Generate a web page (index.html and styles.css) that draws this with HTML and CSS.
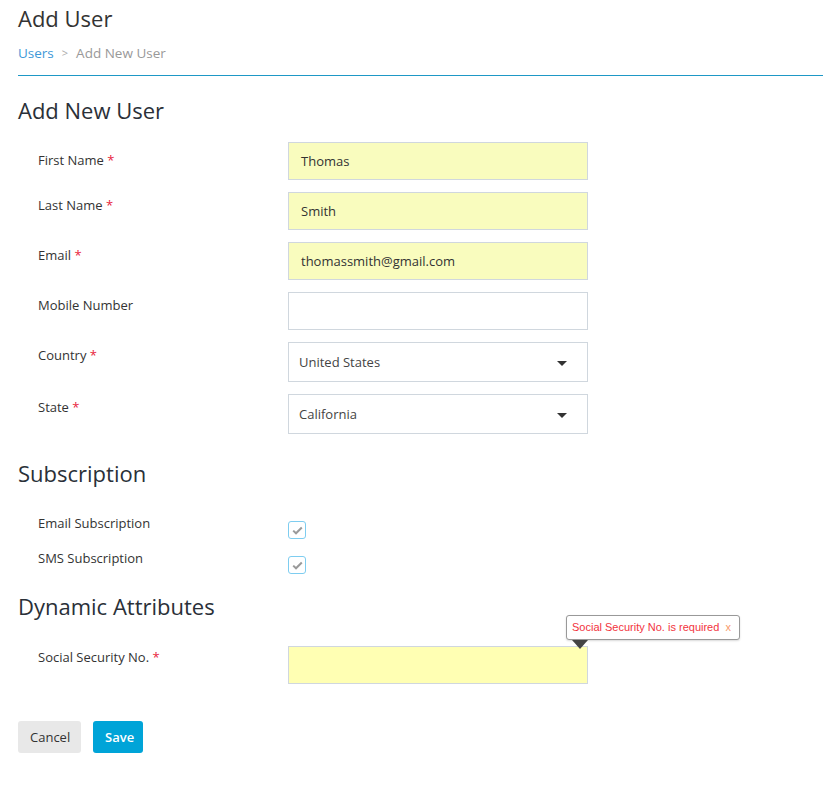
FILE: index.html
```html
<!DOCTYPE html>
<html>
<head>
<meta charset="utf-8">
<link rel="stylesheet" href="styles.css">
</head>
<body>
<div class="page">
  <header class="page-header">
    <h1 class="page-title">Add User</h1>
    <nav class="breadcrumb">
      <a class="crumb-link">Users</a>
      <span class="crumb-sep">&gt;</span>
      <span class="crumb-current">Add New User</span>
    </nav>
  </header>

  <section class="section">
    <h2 class="section-title">Add New User</h2>
    <div class="form-row first-row">
      <label class="form-label">First Name <span class="req">*</span></label>
      <div class="input filled">Thomas</div>
    </div>
    <div class="form-row">
      <label class="form-label">Last Name <span class="req">*</span></label>
      <div class="input filled">Smith</div>
    </div>
    <div class="form-row">
      <label class="form-label">Email <span class="req">*</span></label>
      <div class="input filled">thomassmith@gmail.com</div>
    </div>
    <div class="form-row">
      <label class="form-label">Mobile Number</label>
      <div class="input"></div>
    </div>
    <div class="form-row">
      <label class="form-label">Country <span class="req">*</span></label>
      <div class="select"><span>United States</span><span class="caret"></span></div>
    </div>
    <div class="form-row">
      <label class="form-label">State <span class="req">*</span></label>
      <div class="select"><span>California</span><span class="caret"></span></div>
    </div>
  </section>

  <section class="section sub-section">
    <h2 class="section-title">Subscription</h2>
    <div class="check-row">
      <label class="form-label">Email Subscription</label>
      <span class="checkbox"><svg width="11" height="9" viewBox="0 0 11 9"><path d="M1.2 4.6 L4 7.3 L9.8 1.5" fill="none" stroke="#9a9a9a" stroke-width="2"/></svg></span>
    </div>
    <div class="check-row">
      <label class="form-label">SMS Subscription</label>
      <span class="checkbox"><svg width="11" height="9" viewBox="0 0 11 9"><path d="M1.2 4.6 L4 7.3 L9.8 1.5" fill="none" stroke="#9a9a9a" stroke-width="2"/></svg></span>
    </div>
  </section>

  <section class="section dyn-section">
    <h2 class="section-title">Dynamic Attributes</h2>
    <div class="form-row ssn-row">
      <label class="form-label">Social Security No. <span class="req">*</span></label>
      <div class="input invalid">
        <div class="tooltip">Social Security No. is required <span class="tip-close">x</span></div>
      </div>
    </div>
  </section>

  <div class="actions">
    <button class="btn btn-cancel">Cancel</button>
    <button class="btn btn-save">Save</button>
  </div>
</div>
</body>
</html>
```

FILE: styles.css
```css
* { box-sizing: border-box; }
html, body { margin: 0; padding: 0; background: #fff; }
body {
  font-family: "Open Sans", "Noto Sans", sans-serif;
  color: #333;
  font-size: 13px;
}
.page { padding: 0 1px 0 18px; }
.page-header {
  border-bottom: 1px solid #1e98c6;
  padding-top: 3px;
  height: 76px;
}
.page-title {
  margin: 0;
  font-size: 22px;
  font-weight: 400;
  line-height: 30px;
  color: #333;
}
.breadcrumb {
  margin-top: 11px;
  font-size: 13.5px;
  line-height: 18px;
  display: flex;
  gap: 8px;
  color: #999;
}
.crumb-link { color: #3d98d8; }
.crumb-sep { color: #aaa; font-size: 11px; }
.section-title {
  margin: 0;
  font-size: 22px;
  font-weight: 400;
  color: #2a3038;
  line-height: 30px;
}
.section { padding-top: 19px; }
.section-title { margin-bottom: 17px; }
.form-row {
  display: flex;
  align-items: flex-start;
  margin-bottom: 12px;
}
.form-label {
  width: 270px;
  padding-left: 20px;
  padding-top: 4px;
  line-height: 18px;
  color: #333;
}
.first-row .form-label { padding-top: 9px; }
.req { color: #e8233b; }
.input {
  width: 300px;
  height: 38px;
  border: 1px solid #d0d7de;
  padding: 0 12px;
  line-height: 36px;
  color: #333;
  position: relative;
}
.input.filled { background: #f9fcbe; }
.input.invalid { background: #ffffb3; }
.select {
  width: 300px;
  height: 40px;
  border: 1px solid #d0d7de;
  padding: 0 20px 0 10px;
  display: flex;
  align-items: center;
  justify-content: space-between;
  color: #444;
}
.caret {
  width: 0; height: 0;
  border-left: 5px solid transparent;
  border-right: 5px solid transparent;
  border-top: 5px solid #333;
  margin-top: 2px;
}
.sub-section { padding-top: 12px; }
.sub-section .section-title { margin-bottom: 26px; }
.check-row {
  display: flex;
  align-items: flex-start;
  height: 35px;
}
.check-row .form-label { padding-top: 0; }
.checkbox {
  width: 18px; height: 18px;
  margin-top: 7px;
  border: 1px solid #7ecdf0;
  border-radius: 3px;
  display: flex;
  align-items: center;
  justify-content: center;
}
.dyn-section { padding-top: 7px; }
.dyn-section .section-title { margin-bottom: 25px; }
.ssn-row .form-label { padding-top: 2px; }
.tooltip {
  position: absolute;
  left: 277px;
  top: -32px;
  white-space: nowrap;
  border: 1px solid #999;
  border-radius: 3px;
  background: #fff;
  color: #f2333d;
  font-family: "Liberation Sans", Arial, sans-serif;
  font-size: 11px;
  line-height: 23px;
  padding: 0 8px 0 5px;
  box-shadow: 0 1px 2px rgba(0,0,0,0.15);
}
.tooltip::after {
  content: "";
  position: absolute;
  left: 5px;
  bottom: -10px;
  border-left: 8px solid transparent;
  border-right: 8px solid transparent;
  border-top: 9px solid #444;
}
.tip-close { color: #f99a6b; margin-left: 3px; }
.actions {
  display: flex;
  gap: 12px;
  padding-top: 25px;
}
.btn {
  height: 32px;
  border: none;
  border-radius: 3px;
  font-family: "Open Sans", "Noto Sans", sans-serif;
  font-size: 13px;
  padding: 0 12px;
}
.btn-cancel { background: #e8e8e8; color: #333; width: 63px; }
.btn-save { background: #00a4d8; color: #fff; font-weight: 600; width: 50px; }
```
